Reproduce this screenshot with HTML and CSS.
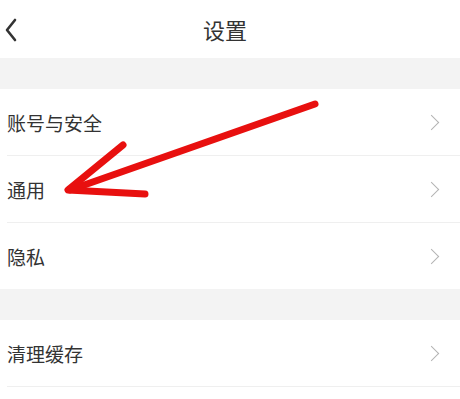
FILE: index.html
```html
<!DOCTYPE html>
<html lang="zh-CN">
<head>
    <meta charset="UTF-8">
    <meta name="viewport" content="width=device-width, initial-scale=1.0">
    <title>设置</title>
    <link rel="stylesheet" href="styles.css">
</head>
<body>
    <!-- 顶部导航 -->
    <header class="nav-bar">
        <span class="back">
            <svg width="14" height="24" viewBox="0 0 14 24"><path d="M11 2 L3 12 L11 22" fill="none" stroke="#333" stroke-width="2.6" stroke-linecap="round" stroke-linejoin="round"/></svg>
        </span>
        <h1 class="title">设置</h1>
    </header>

    <div class="gap"></div>

    <!-- 设置列表 -->
    <ul class="group">
        <li class="item"><span>账号与安全</span><i class="arrow"></i></li>
        <li class="item"><span>通用</span><i class="arrow"></i></li>
        <li class="item"><span>隐私</span><i class="arrow"></i></li>
    </ul>

    <div class="gap"></div>

    <ul class="group">
        <li class="item"><span>清理缓存</span><i class="arrow"></i></li>
    </ul>

    <!-- 红色标注箭头 -->
    <svg class="mark" width="460" height="399" viewBox="0 0 460 399">
        <g fill="none" stroke="#e8100f" stroke-linecap="round" stroke-linejoin="round">
            <path d="M315 104 L70 190" stroke-width="7"/>
            <path d="M123 145 L68 190 L145 194" stroke-width="7"/>
        </g>
    </svg>
</body>
</html>
```

FILE: styles.css
```css
/* 全体 */
body {
    margin: 0;
    font-family: "Noto Sans CJK SC", "Noto Sans", sans-serif;
    color: #333;
    background: #fff;
    position: relative;
    overflow: hidden;
    height: 399px;
}

/* 顶部导航 */
.nav-bar {
    height: 58px;
    display: flex;
    align-items: center;
    justify-content: center;
    padding-right: 10px;
    position: relative;
}
.back {
    position: absolute;
    left: 4px;
    top: 18px;
    display: flex;
}
.title {
    margin: 0;
    font-size: 22px;
    font-weight: normal;
    color: #333;
}

/* 灰色间隔 */
.gap {
    height: 31px;
    background: #f3f3f3;
}

/* 列表 */
.group {
    list-style: none;
    margin: 0;
    padding: 0 0 0 7px;
}
.item {
    height: 66px;
    display: flex;
    align-items: center;
    justify-content: space-between;
    border-bottom: 1px solid #efefef;
    font-size: 19px;
}
.group .item:last-child {
    border-bottom: none;
}
.group:last-of-type .item:last-child {
    border-bottom: 1px solid #efefef;
}
.arrow {
    width: 10px;
    height: 10px;
    border-top: 1.5px solid #b3b3b3;
    border-right: 1.5px solid #b3b3b3;
    transform: rotate(45deg);
    margin-right: 23px;
}

/* 标注箭头 */
.mark {
    position: absolute;
    left: 0;
    top: 0;
}
```
